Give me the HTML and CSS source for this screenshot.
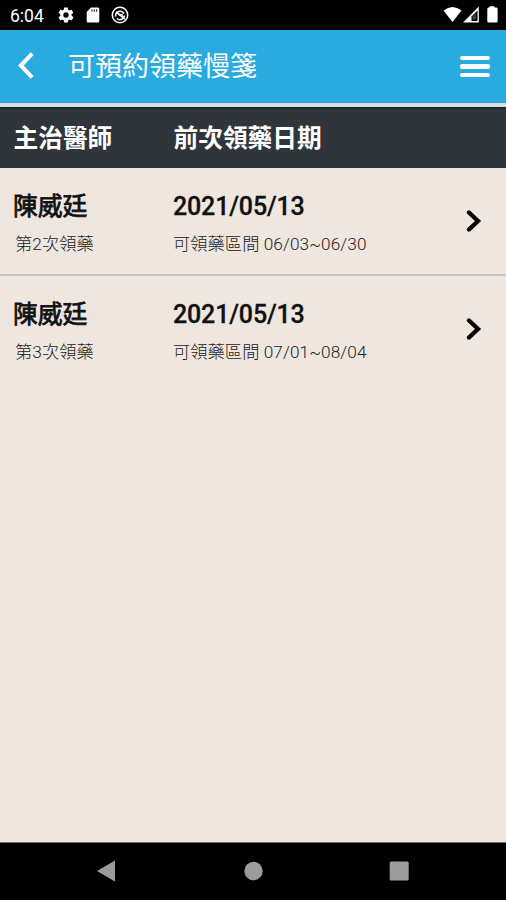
FILE: index.html
```html
<!DOCTYPE html>
<html lang="zh-Hant">
<head>
<meta charset="utf-8">
<title>可預約領藥慢箋</title>
<link rel="stylesheet" href="styles.css">
</head>
<body>
<div class="screen">
  <div class="status">
    <span class="clock">6:04</span>
    <svg class="gear" width="18" height="18" viewBox="0 0 24 24"><path fill="#fff" d="M19.4 13c0-.3.1-.6.1-1s0-.7-.1-1l2.100-1.600c.2-.2.2-.4.1-.6l-2-3.500c-.1-.2-.4-.3-.6-.2l-2.500 1c-.5-.4-1.100-.7-1.700-1l-.4-2.600c0-.3-.2-.5-.5-.5h-4c-.2 0-.5.2-.5.4L9 5.100c-.6.200-1.200.6-1.700 1l-2.500-1c-.2-.1-.5 0-.6.2l-2 3.500c-.1.200-.1.500.1.600L4.500 11c0 .3-.1.700-.1 1s0 .7.1 1l-2.200 1.600c-.2.200-.2.400-.1.600l2 3.500c.1.200.4.300.6.200l2.500-1c.5.400 1.100.7 1.700 1l.4 2.600c0 .3.300.5.500.5h4c.3 0 .5-.2.5-.4L15 19c.6-.2 1.200-.6 1.700-1l2.500 1c.2.100.5 0 .6-.2l2-3.500c.1-.2.100-.5-.1-.600zM12 15.600a3.600 3.600 0 1 1 0-7.200 3.600 3.600 0 0 1 0 7.200z"/></svg>
    <svg class="card" width="14" height="16" viewBox="0 0 14 16"><path fill="#fff" d="M5 0.500H12Q13.300.500 13.300 2V14Q13.300 15.500 12 15.500H2Q.700 15.500.700 14V5z"/><path stroke="#000" stroke-width=".9" d="M6 2.300v2.500M8.300 2.300v2.500M10.600 2.300v2.500"/></svg>
    <svg class="ring" width="18" height="18" viewBox="0 0 18 18" fill="none" stroke="#fff"><circle cx="9" cy="9" r="7.700" stroke-width="1.500"/><path stroke-width="1.600" d="M4.700 10.500A4.500 4.500 0 0 1 13 7.500M13.500 9.500A4.500 4.500 0 0 1 6 12.500M5 6l9 7M7 8.500h4v2.500"/></svg>
    <svg class="signals" width="56" height="18" viewBox="0 0 56 18"><path fill="#fff" d="M.5 4.500Q9.500-2.500 18.500 4.500L9.500 16z"/><path fill="#fff" d="M35.800.500V16.500H20z"/><path fill="#000" d="M28.500 10.500L34.500 4.500V15H28.500z"/><path fill="#fff" d="M29.500 10.500L33 7V13.500H29.500z" opacity=".25"/><path fill="#fff" d="M46.500 1.500V.300h5v1.200h2Q54.600 1.500 54.600 3V15Q54.600 16.500 53.500 16.500h-8.500Q44.300 16.500 44.300 15V3Q44.300 1.500 45.500 1.500z"/></svg>
  </div>
  <header class="bar">
    <svg class="back" width="20" height="30" viewBox="0 0 20 30"><path d="M14.800 5L4.800 15.500 14.800 26" fill="none" stroke="#fff" stroke-width="4" stroke-linecap="square"/></svg>
    <h1 class="title">可預約領藥慢箋</h1>
    <div class="menu"><i></i><i></i><i></i></div>
  </header>
  <div class="columns"><span>主治醫師</span><span>前次領藥日期</span></div>
  <main class="list">
    <div class="row">
      <div class="cell"><div class="name">陳威廷</div><div class="sub order">第2次領藥</div></div>
      <div class="cell"><div class="date">2021/05/13</div><div class="sub">可領藥區間 06/03~06/30</div></div>
      <svg class="chevron" width="16" height="24" viewBox="0 0 16 24"><path d="M3 3.500L12 12 3 20.500" fill="none" stroke="#000" stroke-width="4.300" stroke-linecap="round"/></svg>
    </div>
    <div class="row">
      <div class="cell"><div class="name">陳威廷</div><div class="sub order">第3次領藥</div></div>
      <div class="cell"><div class="date">2021/05/13</div><div class="sub">可領藥區間 07/01~08/04</div></div>
      <svg class="chevron" width="16" height="24" viewBox="0 0 16 24"><path d="M3 3.500L12 12 3 20.500" fill="none" stroke="#000" stroke-width="4.300" stroke-linecap="round"/></svg>
    </div>
  </main>
  <nav class="nav">
    <svg width="20" height="22" viewBox="0 0 20 22"><path fill="#9c9c9c" d="M19 .500V21.500L1 11z"/></svg>
    <svg width="20" height="22" viewBox="0 0 20 22"><circle cx="10.500" cy="11" r="9.200" fill="#9c9c9c"/></svg>
    <svg width="20" height="22" viewBox="0 0 20 22"><rect x=".700" y="1.500" width="19" height="19" rx="1.500" fill="#9c9c9c"/></svg>
  </nav>
</div>
</body>
</html>
```
FILE: styles.css
```css
* { box-sizing: border-box; }
body { margin: 0; font-family: Roboto, "Noto Sans CJK TC", sans-serif; }
svg { display: block; flex: none; }
.screen { width: 506px; height: 900px; display: flex; flex-direction: column; background: #efe7df; overflow: hidden; }
.status { height: 30px; flex: none; background: #000; color: #fff; display: flex; align-items: center; padding: 0 7px 0 10px; }
.clock { width: 47px; padding-top: 1px; font-size: 17.5px; line-height: 30px; }
.card { margin-left: 11px; }
.ring { margin-left: 11px; }
.signals { margin-left: auto; }
.bar { height: 77px; flex: none; background: #29abe0; border-bottom: 4px solid #d9dfe0; display: flex; align-items: center; padding: 0 16px 3px 15px; }
.back { margin-left: 1px; }
.title { margin: 0 0 0 32px; padding-top: 3px; font-size: 27px; line-height: 40px; font-weight: 400; color: #fff; white-space: nowrap; }
.menu { margin-left: auto; display: flex; flex-direction: column; gap: 4px; padding-top: 3px; }
.menu i { display: block; width: 30px; height: 4.300px; border-radius: 2px; background: #fff; }
.columns { height: 61px; flex: none; background: #2f353a; border-top: 2px solid #18262e; color: #fff; display: grid; grid-template-columns: 160px 1fr; align-items: center; padding: 1px 0 0 13.500px; font-size: 24.700px; line-height: 36px; font-weight: 700; }
.list { flex: 1; }
.row { height: 108px; display: grid; grid-template-columns: 160px 1fr 16px; padding: 20px 24px 0 13px; border-bottom: 2px solid #cbc5bf; }
.row:last-child { border-bottom: 0; }
.name, .date { height: 36px; font-size: 24.800px; line-height: 38px; color: #111; }
.name { font-weight: 400; -webkit-text-stroke: .8px #111; }
.date { font-size: 25px; font-weight: 500; letter-spacing: -.15px; -webkit-text-stroke: .3px #111; }
.sub { margin-top: 7px; font-size: 17.200px; line-height: 26px; font-weight: 300; letter-spacing: .1px; color: #222; white-space: nowrap; }
.order { padding-left: 2px; }
.chevron { margin-top: 21px; }
.nav { height: 58px; flex: none; background: #000; border-top: 1px solid #75716d; display: flex; justify-content: space-between; padding: 17px 97px 0 96px; }
```
